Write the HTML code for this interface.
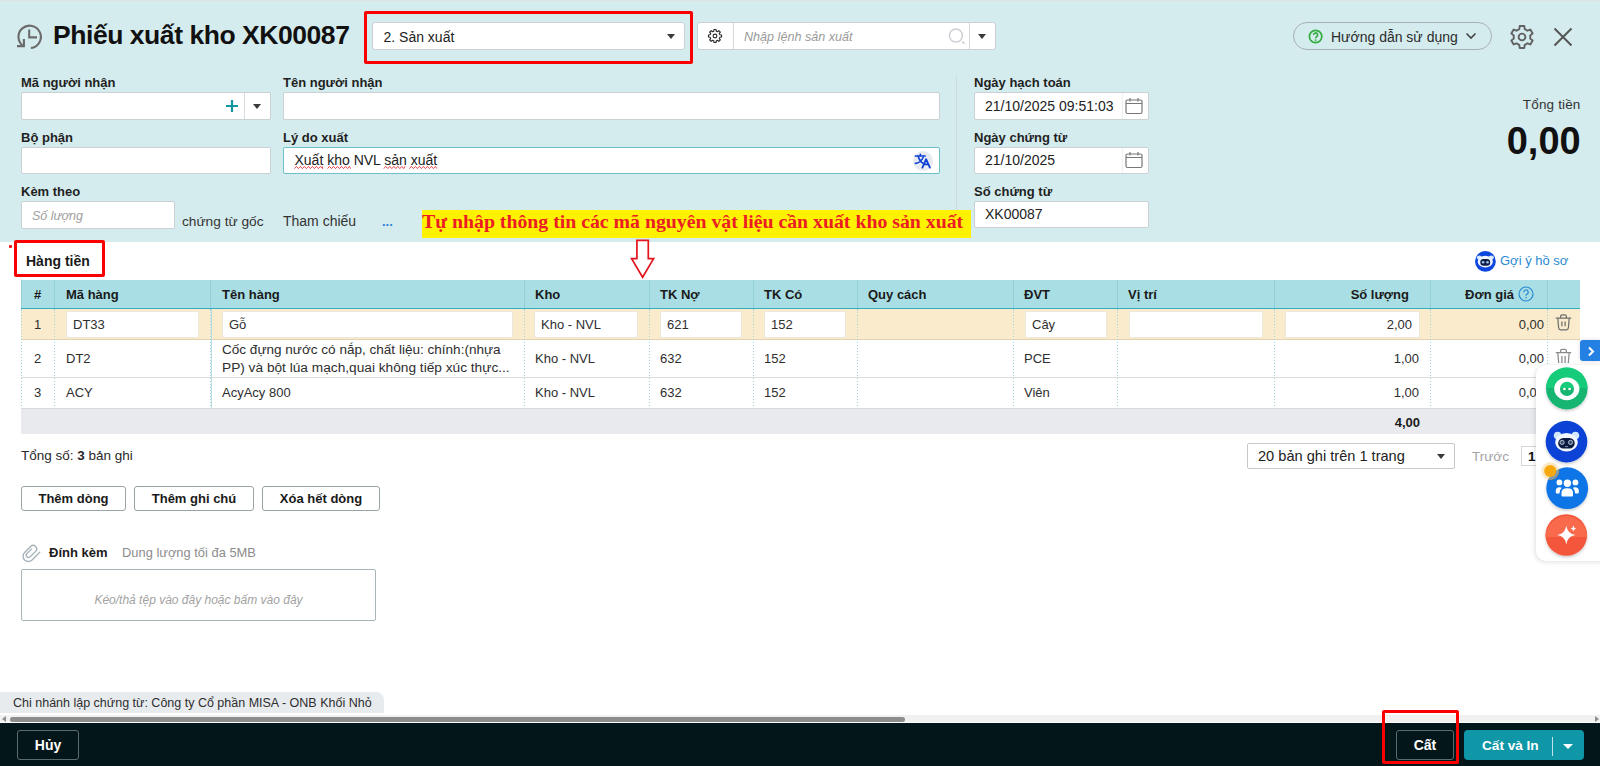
<!DOCTYPE html>
<html><head><meta charset="utf-8">
<style>
*{box-sizing:border-box;margin:0;padding:0}
html,body{width:1600px;height:766px;overflow:hidden;background:#fff}
body{position:relative;font-family:"Liberation Sans",sans-serif;color:#212121;font-size:13px}
.a{position:absolute}
.t{position:absolute;white-space:nowrap;line-height:16px;height:16px}
.lbl{font-weight:bold;font-size:13px;color:#1f1f1f}
.inp{position:absolute;background:#fff;border:1px solid #c9d1d4;border-radius:2px}
.tri{position:absolute;width:0;height:0;border-left:4.5px solid transparent;border-right:4.5px solid transparent;border-top:5px solid #3a3a3a}
.redbox{position:absolute;border:3px solid #fa0000;border-radius:2px}
.th{position:absolute;top:280px;height:28px;line-height:28px;font-weight:bold;font-size:13px;color:#1a1a1a;white-space:nowrap}
.td{position:absolute;font-size:13px;color:#2e2e2e;white-space:nowrap;line-height:16px;height:16px}
.cin{position:absolute;top:311px;height:27px;background:#fff;border:1px solid #ece7dc;border-radius:2px}
.btn{position:absolute;top:486px;height:25px;border:1px solid #9aa3a6;border-radius:3px;background:#fff;font-weight:bold;font-size:13px;text-align:center;line-height:23px;color:#1a1a1a}
</style></head>
<body>
<!-- top teal area -->
<div class="a" style="left:0;top:0;width:1600px;height:242px;background:#d5ecee"></div>
<div class="a" style="left:0;top:0;width:1600px;height:1px;background:#dfe3e4"></div>

<!-- TOP BAR -->
<svg class="a" style="left:10px;top:20px" width="40" height="35" viewBox="0 0 40 35">
  <path d="M20.9 28 A11.2 11.2 0 1 0 13.8 26.4" fill="none" stroke="#6b6b6b" stroke-width="2.1"/>
  <path d="M13.9 19 V26.1 H7" fill="none" stroke="#6b6b6b" stroke-width="2.1"/>
  <path d="M19.2 9.5 V17.4 H27" fill="none" stroke="#6b6b6b" stroke-width="2.1"/>
</svg>
<div class="t" style="left:53px;top:22px;font-size:26.5px;letter-spacing:-0.45px;font-weight:bold;line-height:26px;height:26px;color:#111">Phiếu xuất kho XK00087</div>

<div class="inp" style="left:372px;top:22px;width:313px;height:28px;border-radius:3px"></div>
<div class="t" style="left:383.5px;top:28.9px;font-size:14px;color:#222">2. Sản xuất</div>
<div class="tri" style="left:666.5px;top:34px"></div>
<div class="redbox" style="left:364px;top:11px;width:329px;height:53px"></div>

<div class="inp" style="left:697px;top:22px;width:299px;height:28px;border-radius:3px"></div>
<div class="a" style="left:733px;top:23px;width:1px;height:26px;background:#d3d9db"></div>
<div class="a" style="left:969px;top:23px;width:1px;height:26px;background:#d3d9db"></div>
<svg class="a" style="left:707.2px;top:27.5px" width="16" height="16" viewBox="0 0 16 16">
  <path d="M6.09 3.38 L6.79 3.15 L6.97 1.48 L9.03 1.48 L9.21 3.15 L9.91 3.38 L10.58 3.71 L11.88 2.66 L13.34 4.12 L12.29 5.42 L12.62 6.09 L12.85 6.79 L14.52 6.97 L14.52 9.03 L12.85 9.21 L12.62 9.91 L12.29 10.58 L13.34 11.88 L11.88 13.34 L10.58 12.29 L9.91 12.62 L9.21 12.85 L9.03 14.52 L6.97 14.52 L6.79 12.85 L6.09 12.62 L5.42 12.29 L4.12 13.34 L2.66 11.88 L3.71 10.58 L3.38 9.91 L3.15 9.21 L1.48 9.03 L1.48 6.97 L3.15 6.79 L3.38 6.09 L3.71 5.42 L2.66 4.12 L4.12 2.66 L5.42 3.71 Z" fill="none" stroke="#2a2a2a" stroke-width="1.15" stroke-linejoin="round"/>
  <circle cx="8" cy="8" r="1.9" fill="none" stroke="#2a2a2a" stroke-width="1.15"/>
</svg>
<div class="t" style="left:744px;top:29px;font-size:12.6px;font-style:italic;color:#9b9b9b">Nhập lệnh sản xuất</div>
<svg class="a" style="left:947px;top:27px" width="20" height="20" viewBox="0 0 20 20">
  <circle cx="8.9" cy="8.6" r="6.5" fill="none" stroke="#cbcfd3" stroke-width="1.5"/>
  <path d="M15.4 14.6 L17.4 16.6" stroke="#cbcfd3" stroke-width="1.6"/>
</svg>
<div class="tri" style="left:977.5px;top:34.3px;border-left-width:4.3px;border-right-width:4.3px;border-top-width:5.5px"></div>

<!-- help pill -->
<div class="a" style="left:1293px;top:22px;width:199px;height:28px;border:1.3px solid #aab0b4;border-radius:14px"></div>
<svg class="a" style="left:1308px;top:29px" width="15" height="15" viewBox="0 0 15 15">
  <circle cx="7.6" cy="7.5" r="6.2" fill="none" stroke="#30ab3c" stroke-width="1.7"/>
  <path d="M5.6 6 A2 2 0 1 1 8.5 7.7 Q7.7 8.1 7.7 9.3" fill="none" stroke="#30ab3c" stroke-width="1.6"/>
  <circle cx="7.7" cy="11.1" r="0.95" fill="#30ab3c"/>
</svg>
<div class="t" style="left:1331px;top:29px;font-size:14px;color:#2b2b2b">Hướng dẫn sử dụng</div>
<svg class="a" style="left:1465px;top:32px" width="12" height="8" viewBox="0 0 12 8">
  <path d="M1.5 1.5 L6 6 L10.5 1.5" fill="none" stroke="#444" stroke-width="1.6"/>
</svg>
<svg class="a" style="left:1507.7px;top:23px" width="28" height="28" viewBox="0 0 28 28">
  <path d="M9.85 6.81 L11.30 6.15 L11.67 3.04 L16.33 3.04 L16.70 6.15 L18.15 6.81 L19.45 7.74 L22.32 6.51 L24.65 10.54 L22.15 12.42 L22.30 14.00 L22.15 15.58 L24.65 17.46 L22.32 21.49 L19.45 20.26 L18.15 21.19 L16.70 21.85 L16.33 24.96 L11.67 24.96 L11.30 21.85 L9.85 21.19 L8.55 20.26 L5.68 21.49 L3.35 17.46 L5.85 15.58 L5.70 14.00 L5.85 12.42 L3.35 10.54 L5.68 6.51 L8.55 7.74 Z" fill="none" stroke="#626262" stroke-width="1.9" stroke-linejoin="round"/>
  <circle cx="14" cy="14" r="3.4" fill="none" stroke="#626262" stroke-width="1.9"/>
</svg>
<svg class="a" style="left:1552px;top:26px" width="22" height="22" viewBox="0 0 22 22">
  <path d="M2.5 2.5 L19.5 19.5 M19.5 2.5 L2.5 19.5" stroke="#555" stroke-width="2"/>
</svg>
<!-- FORM -->
<div class="t lbl" style="left:21px;top:75px">Mã người nhận</div>
<div class="t lbl" style="left:283px;top:75px">Tên người nhận</div>
<div class="t lbl" style="left:974px;top:75px">Ngày hạch toán</div>
<div class="t lbl" style="left:21px;top:129.5px">Bộ phận</div>
<div class="t lbl" style="left:283px;top:129.5px">Lý do xuất</div>
<div class="t lbl" style="left:974px;top:129.5px">Ngày chứng từ</div>
<div class="t lbl" style="left:21px;top:183.5px">Kèm theo</div>
<div class="t lbl" style="left:974px;top:183.5px">Số chứng từ</div>

<div class="inp" style="left:21px;top:92px;width:250px;height:28px"></div>
<div class="a" style="left:244px;top:93px;width:1px;height:26px;background:#d8dde0"></div>
<svg class="a" style="left:225px;top:99px" width="14" height="14" viewBox="0 0 14 14">
  <path d="M7 1 V13 M1 7 H13" stroke="#13949f" stroke-width="2.2"/>
</svg>
<div class="tri" style="left:253px;top:104px"></div>

<div class="inp" style="left:283px;top:92px;width:657px;height:28px"></div>
<div class="inp" style="left:974px;top:92px;width:175px;height:28px"></div>
<div class="a" style="left:1122px;top:93px;width:1px;height:26px;background:#eef0f1"></div>
<div class="t" style="left:985px;top:98.2px;font-size:14px;color:#222">21/10/2025 09:51:03</div>

<div class="inp" style="left:21px;top:147px;width:250px;height:27px"></div>
<div class="inp" style="left:283px;top:147px;width:657px;height:27px;border:1.3px solid #6cc0ca"></div>
<div class="t" style="left:294.5px;top:152.2px;font-size:14px;color:#222">Xuất kho NVL sản xuất</div>
<svg class="a" style="left:290px;top:166px" width="150" height="4" viewBox="0 0 150 4"><path d="M4.4 2.6 L6.4 0.4 L8.4 2.6 L10.4 0.4 L12.4 2.6 L14.4 0.4 L16.4 2.6 L18.4 0.4 L20.4 2.6 L22.4 0.4 L24.4 2.6 L26.4 0.4 L28.4 2.6 L30.4 0.4 L32.4 2.6 L32.5 0.4 M37.5 2.6 L39.5 0.4 L41.5 2.6 L43.5 0.4 L45.5 2.6 L47.5 0.4 L49.5 2.6 L51.5 0.4 L53.5 2.6 L55.5 0.4 L57.5 2.6 L59.5 0.4 L60.6 2.6 M93.8 2.6 L95.8 0.4 L97.8 2.6 L99.8 0.4 L101.8 2.6 L103.8 0.4 L105.8 2.6 L107.8 0.4 L109.8 2.6 L111.8 0.4 L113.8 2.6 L115.0 0.4 M119.4 2.6 L121.4 0.4 L123.4 2.6 L125.4 0.4 L127.4 2.6 L129.4 0.4 L131.4 2.6 L133.4 0.4 L135.4 2.6 L137.4 0.4 L139.4 2.6 L141.4 0.4 L143.4 2.6 L145.4 0.4 L146.9 2.6" fill="none" stroke="#e8333a" stroke-width="0.9"/></svg>
<div class="a" style="left:913px;top:151px;width:20px;height:20px;border-radius:10px;background:#e7ebef"></div>
<svg class="a" style="left:911px;top:151px" width="24" height="20" viewBox="0 0 24 20">
  <path d="M4.3 5 H14.2 M9.4 3.2 V5 M7.3 5.5 Q8.6 10.5 12 12.2 M4.4 12.4 Q9.5 11.8 12.2 6.5" fill="none" stroke="#0d3fd6" stroke-width="1.6" stroke-linecap="round"/>
  <path d="M11.4 16.6 L15.1 8.2 L18.9 16.6 M12.9 13.4 H17.4" fill="none" stroke="#0d3fd6" stroke-width="1.8" stroke-linecap="round" stroke-linejoin="round"/>
</svg>

<div class="inp" style="left:974px;top:147px;width:175px;height:27px"></div>
<div class="a" style="left:1122px;top:148px;width:1px;height:25px;background:#eef0f1"></div>
<div class="t" style="left:985px;top:152.2px;font-size:14px;color:#222">21/10/2025</div>

<div class="inp" style="left:21px;top:201px;width:154px;height:27.5px"></div>
<div class="t" style="left:32px;top:207.5px;font-size:12.5px;font-style:italic;color:#a0a0a0">Số lượng</div>
<div class="t" style="left:182px;top:213.5px;font-size:13.7px;color:#333">chứng từ gốc</div>
<div class="t" style="left:283px;top:213px;font-size:14px;color:#333">Tham chiếu</div>
<div class="t" style="left:382px;top:213.5px;font-size:13px;font-weight:bold;color:#2b7fd6">...</div>
<div class="inp" style="left:974px;top:201px;width:175px;height:27px"></div>
<div class="t" style="left:985px;top:206px;font-size:14px;color:#222">XK00087</div>

<div class="a" style="left:956px;top:75px;width:1px;height:157px;background:#c9dcde"></div>

<div class="t" style="right:19.5px;top:96.9px;font-size:13.5px;letter-spacing:0.15px;color:#333">Tổng tiền</div>
<div class="t" style="right:19.3px;top:121.4px;font-size:38px;font-weight:bold;line-height:40px;height:40px;color:#111">0,00</div>

<!-- annotation -->
<div class="a" style="left:422px;top:210px;width:549px;height:28px;background:#fff200"></div>
<div class="t" style="left:422px;top:210.9px;font-family:'Liberation Serif',serif;font-size:19.8px;font-weight:bold;line-height:20px;height:20px;color:#ec1c24">Tự nhập thông tin các mã nguyên vật liệu cần xuất kho sản xuất</div>
<!-- calendar icons -->
<svg class="a" style="left:1125px;top:97px" width="18" height="18" viewBox="0 0 18 18">
  <rect x="1" y="3" width="16" height="13.5" rx="1.5" fill="none" stroke="#777" stroke-width="1.2"/>
  <path d="M1 6.5 H17 M5 1 V4.5 M13 1 V4.5" stroke="#777" stroke-width="1.2"/>
</svg>
<svg class="a" style="left:1125px;top:151px" width="18" height="18" viewBox="0 0 18 18">
  <rect x="1" y="3" width="16" height="13.5" rx="1.5" fill="none" stroke="#777" stroke-width="1.2"/>
  <path d="M1 6.5 H17 M5 1 V4.5 M13 1 V4.5" stroke="#777" stroke-width="1.2"/>
</svg>

<!-- TAB -->
<div class="a" style="left:8.5px;top:244.5px;width:3px;height:3px;border-radius:1px;background:#e8101a"></div>
<div class="t" style="left:26px;top:252.7px;font-size:14px;font-weight:bold;color:#1a1a1a">Hàng tiền</div>
<div class="redbox" style="left:14px;top:240px;width:91px;height:37px"></div>
<svg class="a" style="left:630px;top:239px" width="26" height="41" viewBox="0 0 26 41">
  <path d="M6.9 1.3 H18.3 V19.6 H23.6 L12.6 38.3 L1.6 19.6 H6.9 Z" fill="#fff" stroke="#e4141c" stroke-width="1.7"/>
</svg>

<!-- Goi y ho so -->
<svg class="a" style="left:1474.9px;top:250.7px" width="21" height="21" viewBox="0 0 21 21">
  <circle cx="10.4" cy="10.4" r="10.4" fill="#0b46de"/>
  <ellipse cx="4.3" cy="6.6" rx="2.6" ry="2.1" fill="#d6e8ff"/><ellipse cx="16.3" cy="6.6" rx="2.6" ry="2.1" fill="#d6e8ff"/>
  <ellipse cx="10.3" cy="10.6" rx="7.6" ry="5.9" fill="#eef5ff"/>
  <rect x="5.3" y="8" width="9.9" height="6.8" rx="3.3" fill="#0f1c46"/>
  <circle cx="8.1" cy="11.2" r="1.3" fill="#9cc6e8"/><circle cx="12.5" cy="11.2" r="1.3" fill="#9cc6e8"/>
</svg>
<div class="t" style="left:1500px;top:253px;font-size:13px;color:#2a8ad3">Gợi ý hồ sơ</div>

<!-- TABLE -->
<div class="a" style="left:21px;top:280px;width:1559px;height:29px;background:#a9dee4"></div>
<div class="a" style="left:21px;top:308px;width:1559px;height:1px;background:#33adbd"></div>
<div class="a" style="left:21px;top:309px;width:1559px;height:31px;background:#f9ebcb;border-bottom:1px solid #e2d3b0"></div>
<div class="a" style="left:21px;top:377px;width:1559px;height:1px;background:#dcdcdc"></div>
<div class="a" style="left:21px;top:408px;width:1559px;height:26px;background:#e8eaed;border-top:1.5px solid #d8dbde"></div>
<div class="a" style="left:21px;top:280px;width:1px;height:28px;background:#93cfd8"></div>
<div class="a" style="left:21px;top:309px;width:1px;height:99px;background:repeating-linear-gradient(#a3d4dc 0 1.5px,transparent 1.5px 3px)"></div>
<div class="a" style="left:54px;top:280px;width:1px;height:28px;background:#93cfd8"></div>
<div class="a" style="left:54px;top:309px;width:1px;height:99px;background:repeating-linear-gradient(#a3d4dc 0 1.5px,transparent 1.5px 3px)"></div>
<div class="a" style="left:210px;top:280px;width:1px;height:28px;background:#93cfd8"></div>
<div class="a" style="left:210px;top:309px;width:1px;height:99px;background:repeating-linear-gradient(#a3d4dc 0 1.5px,transparent 1.5px 3px)"></div>
<div class="a" style="left:524px;top:280px;width:1px;height:28px;background:#93cfd8"></div>
<div class="a" style="left:524px;top:309px;width:1px;height:99px;background:repeating-linear-gradient(#a3d4dc 0 1.5px,transparent 1.5px 3px)"></div>
<div class="a" style="left:649px;top:280px;width:1px;height:28px;background:#93cfd8"></div>
<div class="a" style="left:649px;top:309px;width:1px;height:99px;background:repeating-linear-gradient(#a3d4dc 0 1.5px,transparent 1.5px 3px)"></div>
<div class="a" style="left:753px;top:280px;width:1px;height:28px;background:#93cfd8"></div>
<div class="a" style="left:753px;top:309px;width:1px;height:99px;background:repeating-linear-gradient(#a3d4dc 0 1.5px,transparent 1.5px 3px)"></div>
<div class="a" style="left:857px;top:280px;width:1px;height:28px;background:#93cfd8"></div>
<div class="a" style="left:857px;top:309px;width:1px;height:99px;background:repeating-linear-gradient(#a3d4dc 0 1.5px,transparent 1.5px 3px)"></div>
<div class="a" style="left:1013px;top:280px;width:1px;height:28px;background:#93cfd8"></div>
<div class="a" style="left:1013px;top:309px;width:1px;height:99px;background:repeating-linear-gradient(#a3d4dc 0 1.5px,transparent 1.5px 3px)"></div>
<div class="a" style="left:1117px;top:280px;width:1px;height:28px;background:#93cfd8"></div>
<div class="a" style="left:1117px;top:309px;width:1px;height:99px;background:repeating-linear-gradient(#a3d4dc 0 1.5px,transparent 1.5px 3px)"></div>
<div class="a" style="left:1274px;top:280px;width:1px;height:28px;background:#93cfd8"></div>
<div class="a" style="left:1274px;top:309px;width:1px;height:99px;background:repeating-linear-gradient(#a3d4dc 0 1.5px,transparent 1.5px 3px)"></div>
<div class="a" style="left:1430px;top:280px;width:1px;height:28px;background:#93cfd8"></div>
<div class="a" style="left:1430px;top:309px;width:1px;height:99px;background:repeating-linear-gradient(#a3d4dc 0 1.5px,transparent 1.5px 3px)"></div>
<div class="a" style="left:1547px;top:280px;width:1px;height:28px;background:#93cfd8"></div>
<div class="a" style="left:1547px;top:309px;width:1px;height:99px;background:repeating-linear-gradient(#a3d4dc 0 1.5px,transparent 1.5px 3px)"></div>
<div class="a" style="left:211px;top:309px;width:1px;height:99px;background:#b7dde4"></div>
<div class="th" style="top:281px;left:34px">#</div>
<div class="th" style="top:281px;left:66px">Mã hàng</div>
<div class="th" style="top:281px;left:222px">Tên hàng</div>
<div class="th" style="top:281px;left:535px">Kho</div>
<div class="th" style="top:281px;left:660px">TK Nợ</div>
<div class="th" style="top:281px;left:764px">TK Có</div>
<div class="th" style="top:281px;left:868px">Quy cách</div>
<div class="th" style="top:281px;left:1024px">ĐVT</div>
<div class="th" style="top:281px;left:1128px">Vị trí</div>
<div class="th" style="top:281px;left:1300px;width:109px;text-align:right">Số lượng</div>
<div class="th" style="top:281px;left:1440px;width:74px;text-align:right">Đơn giá</div>
<svg class="a" style="left:1518px;top:286px" width="16" height="16" viewBox="0 0 16 16">
  <circle cx="8" cy="8" r="7" fill="none" stroke="#2a8ad3" stroke-width="1.2"/>
  <path d="M5.8 6.2 A2.2 2.2 0 1 1 8.8 8.2 Q8 8.6 8 9.8" fill="none" stroke="#2a8ad3" stroke-width="1.2"/>
  <circle cx="8" cy="11.8" r="0.8" fill="#2a8ad3"/>
</svg>

<!-- row1 inputs -->
<div class="cin" style="left:66px;width:133px"></div>
<div class="cin" style="left:222px;width:291px"></div>
<div class="cin" style="left:534px;width:104px"></div>
<div class="cin" style="left:660px;width:82px"></div>
<div class="cin" style="left:764px;width:82px"></div>
<div class="cin" style="left:1025px;width:82px"></div>
<div class="cin" style="left:1129px;width:134px"></div>
<div class="cin" style="left:1285px;width:135px"></div>

<div class="td" style="left:34px;top:316.8px">1</div>
<div class="td" style="left:73px;top:316.8px">DT33</div>
<div class="td" style="left:229px;top:316.8px">Gỗ</div>
<div class="td" style="left:541px;top:316.8px">Kho - NVL</div>
<div class="td" style="left:667px;top:316.8px">621</div>
<div class="td" style="left:771px;top:316.8px">152</div>
<div class="td" style="left:1032px;top:316.8px">Cây</div>
<div class="td" style="left:1300px;top:316.8px;width:112px;text-align:right">2,00</div>
<div class="td" style="left:1440px;top:316.8px;width:104px;text-align:right">0,00</div>

<div class="td" style="left:34px;top:351.1px">2</div>
<div class="td" style="left:66px;top:351.1px">DT2</div>
<div class="td" style="left:222px;top:342.3px;font-size:13.55px">Cốc đựng nước có nắp, chất liệu: chính:(nhựa</div>
<div class="td" style="left:222px;top:360.3px;font-size:13.7px">PP) và bột lúa mạch,quai không tiếp xúc thực...</div>
<div class="td" style="left:535px;top:351.1px">Kho - NVL</div>
<div class="td" style="left:660px;top:351.1px">632</div>
<div class="td" style="left:764px;top:351.1px">152</div>
<div class="td" style="left:1024px;top:351.1px">PCE</div>
<div class="td" style="left:1300px;top:351.1px;width:119px;text-align:right">1,00</div>
<div class="td" style="left:1440px;top:351.1px;width:104px;text-align:right">0,00</div>

<div class="td" style="left:34px;top:385px">3</div>
<div class="td" style="left:66px;top:385px">ACY</div>
<div class="td" style="left:222px;top:385px">AcyAcy 800</div>
<div class="td" style="left:535px;top:385px">Kho - NVL</div>
<div class="td" style="left:660px;top:385px">632</div>
<div class="td" style="left:764px;top:385px">152</div>
<div class="td" style="left:1024px;top:385px">Viên</div>
<div class="td" style="left:1300px;top:385px;width:119px;text-align:right">1,00</div>
<div class="td" style="left:1440px;top:385px;width:104px;text-align:right">0,00</div>

<div class="td" style="left:1300px;top:414.9px;width:120px;text-align:right;font-weight:bold;color:#1a1a1a">4,00</div>

<!-- trash icons -->
<svg class="a" style="left:1555px;top:313px" width="17" height="18" viewBox="0 0 17 18">
  <path d="M0.8 5 H16.2 M5.6 5 V3.6 Q5.6 1.8 7.4 1.8 H9.6 Q11.4 1.8 11.4 3.6 V5 M2.8 5 L3.6 14.8 Q3.8 16.8 5.6 16.8 H11.4 Q13.2 16.8 13.4 14.8 L14.2 5 M6.9 8.5 V13.2 M10.1 8.5 V13.2" fill="none" stroke="#6f6f6f" stroke-width="1.25"/>
</svg>
<svg class="a" style="left:1555px;top:347px" width="17" height="16" viewBox="0 0 17 16">
  <path d="M0.8 5.5 H16.2 M5.6 5.5 V4.1 Q5.6 2.3 7.4 2.3 H9.6 Q11.4 2.3 11.4 4.1 V5.5 M2.8 5.5 L3.7 16 M14.2 5.5 L13.3 16 M6.9 9 V16 M10.1 9 V16" fill="none" stroke="#8a8a8a" stroke-width="1.25"/>
</svg>
<!-- BOTTOM SECTION -->
<div class="t" style="left:21px;top:448px;font-size:13.5px;color:#2a2a2a">Tổng số: <b>3</b> bản ghi</div>

<div class="a" style="left:1247px;top:442.5px;width:208px;height:26.5px;border:1px solid #c3c9cc;border-radius:2px;background:#fff"></div>
<div class="t" style="left:1258px;top:448px;font-size:14.6px;color:#222">20 bản ghi trên 1 trang</div>
<div class="tri" style="left:1436.5px;top:454px"></div>
<div class="t" style="left:1472px;top:448.5px;font-size:13.5px;color:#a3a3a3">Trước</div>
<div class="a" style="left:1521px;top:446px;width:30px;height:20px;border:1px solid #d6d6d6;background:#fff"></div>
<div class="t" style="left:1528px;top:448.5px;font-size:13.5px;font-weight:bold;color:#111">1</div>

<div class="btn" style="left:21px;width:105px">Thêm dòng</div>
<div class="btn" style="left:134px;width:120px">Thêm ghi chú</div>
<div class="btn" style="left:262px;width:118px">Xóa hết dòng</div>

<svg class="a" style="left:18px;top:540px" width="24" height="26" viewBox="0 0 24 26">
  <path transform="translate(14.5 13.3) scale(1.1) translate(-14.5 -13.3)" d="M21.07 12.36 L14.10 19.32 A4.8 4.8 0 0 1 7.31 12.53 L12.83 7.02 A3.2 3.2 0 0 1 17.36 11.54 L12.41 16.49 A2.1 2.1 0 0 1 9.44 13.52 L13.68 9.28" fill="none" stroke="#a7b3b9" stroke-width="1.25" stroke-linecap="round"/>
</svg>
<div class="t" style="left:49px;top:545px;font-size:13px;font-weight:bold;color:#1a1a1a">Đính kèm</div>
<div class="t" style="left:122px;top:545px;font-size:12.9px;color:#8c8c8c">Dung lượng tối đa 5MB</div>
<div class="a" style="left:21px;top:569px;width:355px;height:52px;border:1px solid #a9b6b9;border-radius:2px"></div>
<div class="t" style="left:21px;top:592px;width:355px;text-align:center;font-size:12px;font-style:italic;color:#a2a2a2">Kéo/thả tệp vào đây hoặc bấm vào đây</div>

<!-- branch label -->
<div class="a" style="left:0;top:692px;width:384px;height:21px;background:#e8ebee;border-top-right-radius:8px"></div>
<div class="t" style="left:13px;top:695px;font-size:12.5px;color:#2e2e2e">Chi nhánh lập chứng từ: Công ty Cổ phần MISA - ONB Khối Nhỏ</div>

<!-- scrollbar -->
<div class="a" style="left:0;top:715px;width:1600px;height:7.2px;background:#f1f1f1"></div>
<div class="a" style="left:10px;top:717px;width:895px;height:5px;border-radius:3px;background:#8d8d8d"></div>
<div class="a" style="left:2px;top:716px;width:0;height:0;border-top:3px solid transparent;border-bottom:3px solid transparent;border-right:4px solid #8d8d8d"></div>
<div class="a" style="left:1595px;top:716px;width:0;height:0;border-top:3px solid transparent;border-bottom:3px solid transparent;border-left:4px solid #8d8d8d"></div>

<!-- footer -->
<div class="a" style="left:0;top:722.9px;width:1600px;height:44px;background:#03161a"></div>
<div class="a" style="left:17px;top:730px;width:62px;height:30px;border:1.5px solid #5c6a6e;border-radius:3px"></div>
<div class="t" style="left:17px;top:737px;width:62px;text-align:center;font-size:14px;font-weight:bold;color:#fff">Hủy</div>
<div class="a" style="left:1396px;top:730px;width:58px;height:30px;border:1.5px solid #5c6a6e;border-radius:3px"></div>
<div class="t" style="left:1396px;top:737px;width:58px;text-align:center;font-size:14px;font-weight:bold;color:#fff">Cất</div>
<div class="redbox" style="left:1382.2px;top:710px;width:76.6px;height:53.5px"></div>
<div class="a" style="left:1464px;top:730px;width:120px;height:30px;border-radius:4px;background:#0f97a7"></div>
<div class="t" style="left:1482px;top:737.5px;font-size:13.6px;font-weight:bold;color:#fff">Cất và In</div>
<div class="a" style="left:1552px;top:737px;width:1px;height:19px;background:#bfe3e8"></div>
<div class="tri" style="left:1563px;top:743.5px;border-top-color:#fff;border-left-width:5px;border-right-width:5px;border-top-width:5.5px"></div>

<!-- floating panel -->
<div class="a" style="left:1580px;top:340px;width:20px;height:21px;background:#2480e3;border-radius:3px 0 0 3px;box-shadow:0 0 4px rgba(0,0,0,0.14)"></div>
<svg class="a" style="left:1585.5px;top:345.5px" width="10" height="11" viewBox="0 0 10 11">
  <path d="M3 1.5 L7 5.5 L3 9.5" fill="none" stroke="#fff" stroke-width="2"/>
</svg>
<div class="a" style="left:1536px;top:364.5px;width:70px;height:196px;background:#fff;border-radius:10px 0 0 10px;box-shadow:-1px 1px 5px rgba(0,0,0,0.13)"></div>
<svg class="a" style="left:1536px;top:364px" width="64" height="200" viewBox="0 0 64 200">
  <defs>
    <filter id="sh" x="-30%" y="-30%" width="160%" height="160%"><feDropShadow dx="0" dy="1.5" stdDeviation="1.4" flood-color="#000" flood-opacity="0.22"/></filter>
    <clipPath id="cb"><circle cx="31.2" cy="124.2" r="20.9"/></clipPath>
  </defs>
  <!-- green chat -->
  <g filter="url(#sh)">
    <circle cx="30.8" cy="24.7" r="20.7" fill="#12b572"/>
  </g>
  <path d="M10.1 24 A20.7 20.7 0 0 1 51.5 24 Z" fill="#16cc7a"/>
  <path fill-rule="evenodd" fill="#fff" d="M18.2 24.8 A12.6 11.4 0 1 0 43.4 24.8 A12.6 11.4 0 1 0 18.2 24.8 Z M24 24.9 A7 7.2 0 1 1 38 24.9 A7 7.2 0 1 1 24 24.9 Z"/>
  <path d="M35.5 30.4 Q37.5 32.4 39.8 32.2 L37.6 28.6 Z" fill="#fff"/>
  <circle cx="28.4" cy="25" r="1.35" fill="#fff"/><circle cx="33.6" cy="25" r="1.35" fill="#fff"/>
  <!-- robot -->
  <g filter="url(#sh)"><circle cx="30.5" cy="77.6" r="20.8" fill="#0743d6"/></g>
  <circle cx="21.6" cy="71.6" r="3.8" fill="#d3e8fa"/><circle cx="39.4" cy="71.6" r="3.8" fill="#d3e8fa"/>
  <ellipse cx="30.5" cy="78.2" rx="11.2" ry="9.2" fill="#f3f8ff"/>
  <rect x="22.2" y="73.9" width="16.5" height="10.6" rx="5.2" fill="#0c1a40"/>
  <circle cx="26.1" cy="78.4" r="2.1" fill="#3d5070" stroke="#b9cadc" stroke-width="0.9"/><circle cx="34.5" cy="78.4" r="2.1" fill="#3d5070" stroke="#b9cadc" stroke-width="0.9"/>
  <path d="M29 82.6 H32" stroke="#8fa3b8" stroke-width="0.9"/>
  <!-- people -->
  <g filter="url(#sh)"><circle cx="31.2" cy="124.2" r="20.9" fill="#0c74e6"/></g>
  <circle cx="31.4" cy="119.3" r="3.7" fill="#fff"/><circle cx="23.4" cy="118.4" r="2.9" fill="#fff"/><circle cx="39.4" cy="118.4" r="2.9" fill="#fff"/>
  <path d="M25.5 131.5 V128.6 Q25.5 124.2 31.3 124.2 Q37 124.2 37 128.6 V131.5 Q37 132.6 35.9 132.6 H26.6 Q25.5 132.6 25.5 131.5 Z" fill="#fff"/>
  <path d="M19.8 128.6 V126.8 Q19.8 123.3 23.5 123.3 Q24.8 123.3 25.8 123.8 Q23.6 125.7 23.4 129.6 H20.8 Q19.8 129.6 19.8 128.6 Z" fill="#fff"/>
  <path d="M42.8 128.6 V126.8 Q42.8 123.3 39.1 123.3 Q37.8 123.3 36.8 123.8 Q39 125.7 39.2 129.6 H41.8 Q42.8 129.6 42.8 128.6 Z" fill="#fff"/>
  <circle cx="14.3" cy="107" r="8.4" fill="none" stroke="#556270" stroke-opacity="0.55" stroke-width="1.8" clip-path="url(#cb)"/>
  <circle cx="14.3" cy="107" r="9" fill="#f3cf86" fill-opacity="0.45"/>
  <circle cx="14.3" cy="107" r="6.1" fill="#f7a80d"/>
  <!-- sparkle -->
  <g filter="url(#sh)"><circle cx="30.3" cy="171" r="20.8" fill="#f3573a"/></g>
  <path d="M9.5 172.9 A20.8 20.8 0 0 1 51.1 172.9 Z" fill="#f9694c"/>
  <path d="M30.3 161.4 Q31.4 169.9 39.6 171 Q31.4 172.1 30.3 180.6 Q29.2 172.1 21.2 171 Q29.2 169.9 30.3 161.4 Z" fill="#fff"/>
  <path d="M37.4 161.5 Q37.7 164.2 40.4 164.5 Q37.7 164.8 37.4 167.5 Q37.1 164.8 34.4 164.5 Q37.1 164.2 37.4 161.5 Z" fill="#fff"/>
</svg>
</body></html>
